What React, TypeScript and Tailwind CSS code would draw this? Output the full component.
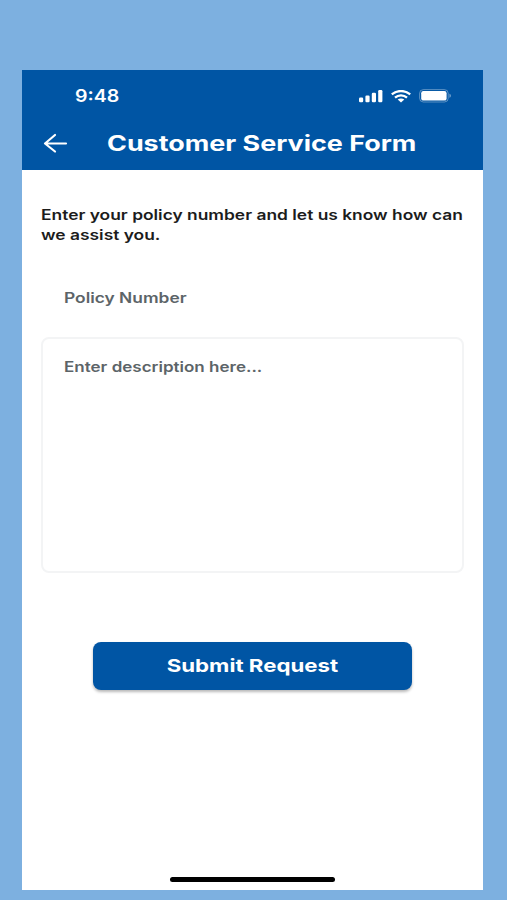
function SignalIcon() {
  return (
    <svg width="24" height="13" viewBox="0 0 24 13" fill="#fff">
      <rect x="0" y="7.5" width="4.2" height="4.8" rx="1.3" />
      <rect x="6.4" y="5.5" width="4.2" height="6.8" rx="1.2" />
      <rect x="12.8" y="2.7" width="4.2" height="9.6" rx="1.2" />
      <rect x="19.2" y="0" width="4.2" height="12.3" rx="1.2" />
    </svg>
  );
}

function WifiIcon() {
  return (
    <svg
      width="20"
      height="13"
      viewBox="0 0 20 13"
      fill="none"
      stroke="#fff"
      strokeWidth="2.3"
    >
      <path d="M0.8 4.4C6 -0.1 14 -0.1 19.2 4.4" />
      <path d="M4 7.7C7.4 4.6 12.6 4.6 16 7.7" />
      <path d="M6.7 9.6C8.7 8 11.3 8 13.3 9.6L10 12.4Z" fill="#fff" stroke="none" />
    </svg>
  );
}

function BatteryIcon() {
  return (
    <svg width="33" height="14" viewBox="0 0 33 14" fill="none">
      <rect x="0.6" y="0.6" width="28.6" height="12.4" rx="3.8" stroke="#fff" strokeOpacity="0.35" />
      <rect x="2.2" y="2" width="25.4" height="9.6" rx="2.2" fill="#fff" />
      <path d="M30.5 4.8v4c.8-.3 1.3-1.1 1.3-2s-.5-1.7-1.3-2z" fill="#fff" fillOpacity="0.5" />
    </svg>
  );
}

export default function App() {
  return (
    <div className="h-[900px] w-full bg-[#7db0e0] pt-[70px] pl-[22px] font-['Inter',sans-serif]">
      <main className="flex h-[820px] w-[461px] flex-col bg-white">
        <header className="h-[100px] bg-[#0055a4] text-white">
          <div className="flex h-[52px] items-center pl-[53px]">
            <span className="w-[284px] whitespace-nowrap pt-[2px] text-[17px] font-semibold">
              <span className="inline-block origin-left scale-x-[1.15]">9:48</span>
            </span>
            <SignalIcon />
            <span className="ml-[8px]">
              <WifiIcon />
            </span>
            <span className="ml-[8px]">
              <BatteryIcon />
            </span>
          </div>
          <div className="flex h-[42px] items-center pl-[21px]">
            <svg
              width="25"
              height="21"
              viewBox="0 0 25 21"
              fill="none"
              stroke="#fff"
              strokeWidth="2.2"
              strokeLinecap="round"
              strokeLinejoin="round"
            >
              <path d="M23 10.5H2M12 2L2 10.5L12 18.5" />
            </svg>
            <h1 className="ml-[39px] origin-left scale-x-[1.28] whitespace-nowrap pt-[2px] text-[21px] font-bold">
              Customer Service Form
            </h1>
          </div>
        </header>

        <section className="flex flex-1 flex-col px-[19px] pt-[35px]">
          <p className="w-fit origin-left scale-x-[1.242] whitespace-nowrap text-[14px] leading-5 font-semibold text-[#1c1c1c]">
            Enter your policy number and let us know how can
            <br />
            we assist you.
          </p>
          <div className="mt-[35px] flex h-[34px] items-center pl-[23px]">
            <span className="origin-left scale-x-[1.24] whitespace-nowrap text-[14px] font-semibold text-[#5c6468]">
              Policy Number
            </span>
          </div>
          <div className="mt-[23px] h-[236px] rounded-lg border-2 border-[#f3f4f5] pt-[15px] pl-[21px]">
            <span className="inline-block origin-left scale-x-[1.215] whitespace-nowrap text-[14px] leading-5 font-semibold text-[#5c6468]">
              Enter description here...
            </span>
          </div>
          <button className="mt-[69px] ml-[52px] h-[48px] w-[319px] rounded-lg bg-[#0055a4] pb-[1px] text-[18px] font-bold text-white shadow-[0_2px_3px_rgba(0,0,0,0.28)]">
            <span className="inline-block scale-x-[1.235]">Submit Request</span>
          </button>
          <div className="mt-auto mb-[8px] ml-[129px] h-[5px] w-[165px] rounded-full bg-black" />
        </section>
      </main>
    </div>
  );
}
